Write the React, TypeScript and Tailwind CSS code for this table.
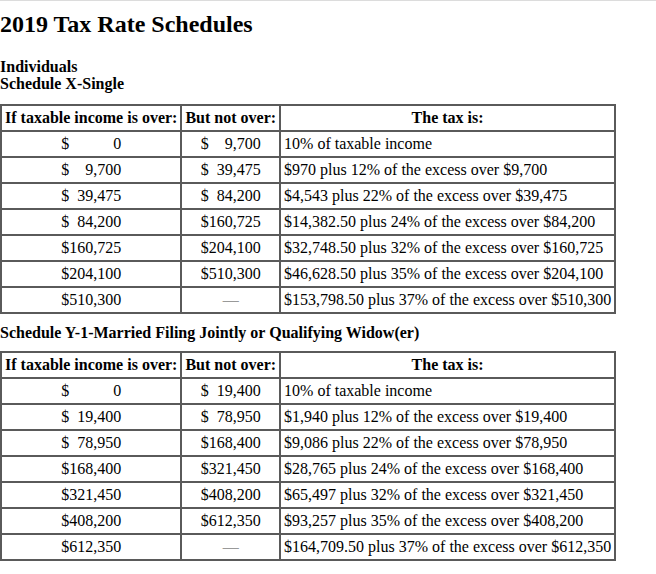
const SINGLE = [
    ['0', '9,700', '10% of taxable income'],
    ['9,700', '39,475', '$970 plus 12% of the excess over $9,700'],
    ['39,475', '84,200', '$4,543 plus 22% of the excess over $39,475'],
    ['84,200', '160,725', '$14,382.50 plus 24% of the excess over $84,200'],
    ['160,725', '204,100', '$32,748.50 plus 32% of the excess over $160,725'],
    ['204,100', '510,300', '$46,628.50 plus 35% of the excess over $204,100'],
    ['510,300', '', '$153,798.50 plus 37% of the excess over $510,300'],
]

const MARRIED = [
    ['0', '19,400', '10% of taxable income'],
    ['19,400', '78,950', '$1,940 plus 12% of the excess over $19,400'],
    ['78,950', '168,400', '$9,086 plus 22% of the excess over $78,950'],
    ['168,400', '321,450', '$28,765 plus 24% of the excess over $168,400'],
    ['321,450', '408,200', '$65,497 plus 32% of the excess over $321,450'],
    ['408,200', '612,350', '$93,257 plus 35% of the excess over $408,200'],
    ['612,350', '', '$164,709.50 plus 37% of the excess over $612,350'],
]

const cell = 'border border-[#5a5a5a] px-[3px] py-[3px] leading-[18px]'

function Amount({ value }: { value: string }) {
    if (!value) return <span className="text-[#999]">—</span>
    return (
        <span className="inline-flex whitespace-nowrap">
            <span>$</span>
            <span className="w-[52px] text-right">{value}</span>
        </span>
    )
}

function RateTable({ rows }: { rows: string[][] }) {
    return (
        <table className="border-separate border-spacing-0 border border-[#5a5a5a]">
            <thead>
                <tr>
                    <th className={`${cell} font-bold`}>If taxable income is over:</th>
                    <th className={`${cell} font-bold`}>But not over:</th>
                    <th className={`${cell} font-bold text-center`}>The tax is:</th>
                </tr>
            </thead>
            <tbody>
                {rows.map(r => (
                    <tr key={r[0]}>
                        <td className={`${cell} text-center`}><Amount value={r[0]} /></td>
                        <td className={`${cell} text-center`}><Amount value={r[1]} /></td>
                        <td className={`${cell} text-left whitespace-nowrap`}>{r[2]}</td>
                    </tr>
                ))}
            </tbody>
        </table>
    )
}

export default function App() {
    return (
        <div className="min-h-[574px] w-[656px] bg-white border-t border-[#dcdcdc] text-black text-[16px]" style={{ fontFamily: "'Liberation Serif', 'Times New Roman', serif" }}>
            <h2 className="mt-[9px] text-[24px] leading-[28px] font-bold">2019 Tax Rate Schedules</h2>
            <div className="mt-5 font-bold leading-[17px]">
                <div>Individuals</div>
                <div>Schedule X-Single</div>
            </div>
            <div className="mt-[12px]">
                <RateTable rows={SINGLE} />
            </div>
            <div className="mt-[10px] mb-[9px] font-bold leading-[18px]">Schedule Y-1-Married Filing Jointly or Qualifying Widow(er)</div>
            <RateTable rows={MARRIED} />
        </div>
    )
}
